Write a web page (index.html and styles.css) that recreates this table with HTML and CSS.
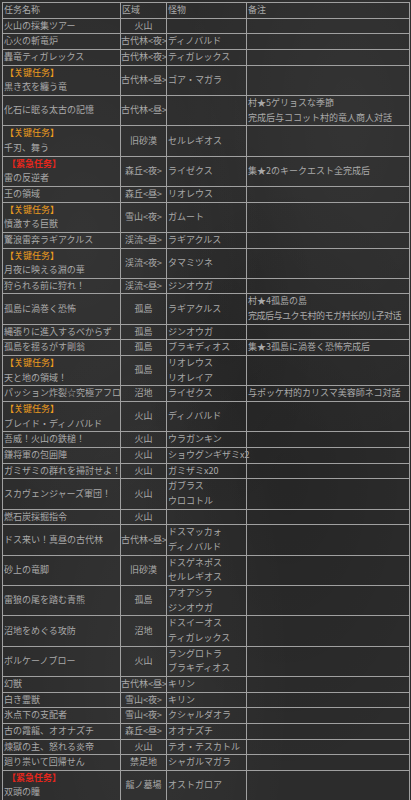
FILE: index.html
```html
<!DOCTYPE html>
<html lang="ja">
<head>
<meta charset="utf-8">
<title>任务列表</title>
<link rel="stylesheet" href="styles.css">
</head>
<body>
<table class="quests">
<colgroup>
<col class="c-name"><col class="c-area"><col class="c-mon"><col class="c-note">
</colgroup>
<tbody>
<tr><td>任务名称</td><td class="left">区域</td><td>怪物</td><td>备注</td></tr>
<tr><td>火山の採集ツアー</td><td class="area">火山</td><td></td><td></td></tr>
<tr><td>心火の斬竜炉</td><td class="area">古代林&lt;夜&gt;</td><td>ディノバルド</td><td></td></tr>
<tr><td>轟竜ティガレックス</td><td class="area">古代林&lt;夜&gt;</td><td>ティガレックス</td><td></td></tr>
<tr><td><span class="key">【关键任务】</span><br>黒き衣を纏う竜</td><td class="area">古代林&lt;昼&gt;</td><td>ゴア・マガラ</td><td></td></tr>
<tr><td>化石に眠る太古の記憶</td><td class="area">古代林&lt;昼&gt;</td><td></td><td>村★5ゲリョスな季節<br>完成后与ココット村的竜人商人対話</td></tr>
<tr><td><span class="key">【关键任务】</span><br>千刃、舞う</td><td class="area">旧砂漠</td><td>セルレギオス</td><td></td></tr>
<tr><td><span class="urgent">【紧急任务】</span><br>雷の反逆者</td><td class="area">森丘&lt;夜&gt;</td><td>ライゼクス</td><td>集★2のキークエスト全完成后</td></tr>
<tr><td>王の領域</td><td class="area">森丘&lt;昼&gt;</td><td>リオレウス</td><td></td></tr>
<tr><td><span class="key">【关键任务】</span><br>憤激する巨獣</td><td class="area">雪山&lt;夜&gt;</td><td>ガムート</td><td></td></tr>
<tr><td>驚浪雷奔ラギアクルス</td><td class="area">渓流&lt;昼&gt;</td><td>ラギアクルス</td><td></td></tr>
<tr><td><span class="key">【关键任务】</span><br>月夜に映える淵の華</td><td class="area">渓流&lt;夜&gt;</td><td>タマミツネ</td><td></td></tr>
<tr><td>狩られる前に狩れ！</td><td class="area">渓流&lt;昼&gt;</td><td>ジンオウガ</td><td></td></tr>
<tr><td>孤島に渦巻く恐怖</td><td class="area">孤島</td><td>ラギアクルス</td><td>村★4孤島の島<br><span class="tight">完成后与ユクモ村的モガ村长的儿子对话</span></td></tr>
<tr><td>縄張りに進入するべからず</td><td class="area">孤島</td><td>ジンオウガ</td><td></td></tr>
<tr><td>孤島を揺るがす剛翁</td><td class="area">孤島</td><td>ブラキディオス</td><td>集★3孤島に渦巻く恐怖完成后</td></tr>
<tr><td><span class="key">【关键任务】</span><br>天と地の領域！</td><td class="area">孤島</td><td>リオレウス<br>リオレイア</td><td></td></tr>
<tr><td>パッション炸裂☆究極アフロ</td><td class="area">沼地</td><td>ライゼクス</td><td>与ポッケ村的カリスマ美容師ネコ対話</td></tr>
<tr><td><span class="key">【关键任务】</span><br>ブレイド・ディノバルド</td><td class="area">火山</td><td>ディノバルド</td><td></td></tr>
<tr><td>吾威！火山の鉄槌！</td><td class="area">火山</td><td>ウラガンキン</td><td></td></tr>
<tr><td>鎌将軍の包囲陣</td><td class="area">火山</td><td>ショウグンギザミx2</td><td></td></tr>
<tr><td>ガミザミの群れを掃討せよ！</td><td class="area">火山</td><td>ガミザミx20</td><td></td></tr>
<tr><td>スカヴェンジャーズ軍団！</td><td class="area">火山</td><td>ガブラス<br>ウロコトル</td><td></td></tr>
<tr><td>燃石炭採掘指令</td><td class="area">火山</td><td></td><td></td></tr>
<tr><td>ドス来い！真昼の古代林</td><td class="area">古代林&lt;昼&gt;</td><td>ドスマッカォ<br>ディノバルド</td><td></td></tr>
<tr><td>砂上の竜脚</td><td class="area">旧砂漠</td><td>ドスゲネポス<br>セルレギオス</td><td></td></tr>
<tr><td>雷狼の尾を踏む青熊</td><td class="area">孤島</td><td>アオアシラ<br>ジンオウガ</td><td></td></tr>
<tr><td>沼地をめぐる攻防</td><td class="area">沼地</td><td>ドスイーオス<br>ティガレックス</td><td></td></tr>
<tr><td>ボルケーノブロー</td><td class="area">火山</td><td>ラングロトラ<br>ブラキディオス</td><td></td></tr>
<tr><td>幻獣</td><td class="area">古代林&lt;昼&gt;</td><td>キリン</td><td></td></tr>
<tr><td>白き霊獣</td><td class="area">雪山&lt;夜&gt;</td><td>キリン</td><td></td></tr>
<tr><td>氷点下の支配者</td><td class="area">雪山&lt;夜&gt;</td><td>クシャルダオラ</td><td></td></tr>
<tr><td>古の霞龍、オオナズチ</td><td class="area">森丘&lt;昼&gt;</td><td>オオナズチ</td><td></td></tr>
<tr><td>煉獄の主、怒れる炎帝</td><td class="area">火山</td><td>テオ・テスカトル</td><td></td></tr>
<tr><td>廻り祟いて回帰せん</td><td class="area">禁足地</td><td>シャガルマガラ</td><td></td></tr>
<tr><td><span class="urgent">【紧急任务】</span><br>双頭の瞳</td><td class="area">龍ノ墓場</td><td>オストガロア</td><td></td></tr>
</tbody>
</table>
</body>
</html>
```
FILE: styles.css
```css
html, body {
  margin: 0;
  padding: 0;
}
body {
  width: 411px;
  height: 800px;
  padding: 2px;
  box-sizing: border-box;
  background-color: #2c2c2c;
  background-image:
    radial-gradient(ellipse at 20% 30%, rgba(255,255,255,0.04), transparent 40%),
    radial-gradient(ellipse at 70% 60%, rgba(0,0,0,0.14), transparent 45%),
    radial-gradient(ellipse at 85% 15%, rgba(255,255,255,0.035), transparent 35%),
    radial-gradient(ellipse at 35% 85%, rgba(255,255,255,0.035), transparent 40%),
    radial-gradient(ellipse at 55% 40%, rgba(0,0,0,0.1), transparent 30%);
  font-family: "Noto Sans CJK JP", "Noto Sans CJK SC", sans-serif;
  font-size: 9px;
  color: #a9a9a9;
}
.quests {
  width: 407px;
  table-layout: fixed;
  border-collapse: collapse;
  border: 1px solid #a0a0a0;
}
.c-name { width: 118px; }
.c-area { width: 46px; }
.c-mon { width: 80px; }
.c-note { width: 163px; }
.quests td {
  border: 1px solid #a0a0a0;
  padding: 0 1px;
  line-height: 14.65px;
  height: 14.65px;
  white-space: nowrap;
  vertical-align: middle;
  text-align: left;
  overflow: visible;
}
.quests td.area {
  text-align: center;
  padding: 0;
}
.key {
  color: #ee9d1e;
  padding-left: 1px;
}
.urgent {
  color: #e5261c;
  font-weight: bold;
  padding-left: 3px;
}
.tight {
  letter-spacing: -0.5px;
}
```
